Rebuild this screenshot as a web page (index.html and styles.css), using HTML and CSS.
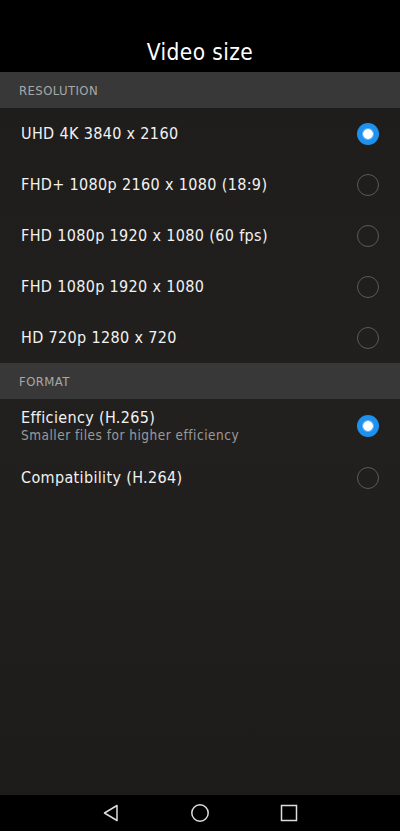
FILE: index.html
```html
<!DOCTYPE html>
<html>
<head>
<meta charset="utf-8">
<link rel="stylesheet" href="styles.css">
</head>
<body>
<div class="screen">
  <header class="topbar"><h1 class="title">Video size</h1></header>
  <main class="content">
    <div class="section">RESOLUTION</div>
    <div class="row"><span class="label">UHD 4K 3840 x 2160</span><span class="radio on"></span></div>
    <div class="row"><span class="label">FHD+ 1080p 2160 x 1080 (18:9)</span><span class="radio"></span></div>
    <div class="row"><span class="label">FHD 1080p 1920 x 1080 (60 fps)</span><span class="radio"></span></div>
    <div class="row"><span class="label">FHD 1080p 1920 x 1080</span><span class="radio"></span></div>
    <div class="row"><span class="label">HD 720p 1280 x 720</span><span class="radio"></span></div>
    <div class="section">FORMAT</div>
    <div class="row tall"><div class="texts"><span class="label">Efficiency (H.265)</span><span class="sub">Smaller files for higher efficiency</span></div><span class="radio on"></span></div>
    <div class="row"><span class="label">Compatibility (H.264)</span><span class="radio"></span></div>
  </main>
  <nav class="navbar">
    <svg class="nav-icon" width="20" height="20" viewBox="0 0 20 20"><path d="M16 2.5 L3.5 10 L16 17.5 Z" fill="none" stroke="#ddd" stroke-width="1.5" stroke-linejoin="round"/></svg>
    <svg class="nav-icon" width="20" height="20" viewBox="0 0 20 20"><circle cx="10" cy="10" r="8.2" fill="none" stroke="#ddd" stroke-width="1.5"/></svg>
    <svg class="nav-icon" width="20" height="20" viewBox="0 0 20 20"><rect x="2.5" y="2.5" width="15" height="15" fill="none" stroke="#ddd" stroke-width="1.5"/></svg>
  </nav>
</div>
</body>
</html>
```
FILE: styles.css
```css
* { box-sizing: border-box; margin: 0; padding: 0; }
html, body { width: 400px; height: 831px; background: #000; overflow: hidden; }
body { font-family: "DejaVu Sans Condensed", "DejaVu Sans", sans-serif; color: #f2f2f2; }
.screen { display: flex; flex-direction: column; height: 831px; }
.topbar { height: 72px; background: #000; display: flex; align-items: flex-end; justify-content: center; padding-bottom: 7px; }
.title { font-size: 22.5px; font-weight: normal; color: #fff; letter-spacing: 0.4px; }
.content { flex: 1; background: linear-gradient(180deg, #1f1d1b 0%, #22201e 50%, #1e1c1a 100%); }
.section { height: 36px; background: #383838; color: #a8a8a8; font-size: 13px; letter-spacing: 0.4px; display: flex; align-items: center; padding-left: 19px; }
.row { height: 51px; display: flex; align-items: center; justify-content: space-between; padding: 0 21px 0 21px; }
.row.tall { height: 53px; }
.texts { display: flex; flex-direction: column; }
.label { font-size: 16px; color: #f2f2f2; letter-spacing: 0.35px; }
.sub { font-size: 13.5px; color: #9a9a9a; margin-top: 0; letter-spacing: 0.5px; }
.radio { width: 22px; height: 22px; border-radius: 50%; border: 1.5px solid #5a5a5a; flex: none; }
.radio.on { border: none; background: radial-gradient(circle, #ffffff 0 4.5px, #7fc4ff 5px, #1e90ee 6.5px); }
.navbar { height: 36px; background: #000; display: flex; align-items: center; justify-content: center; gap: 69px; }
.nav-icon { display: block; }
```
